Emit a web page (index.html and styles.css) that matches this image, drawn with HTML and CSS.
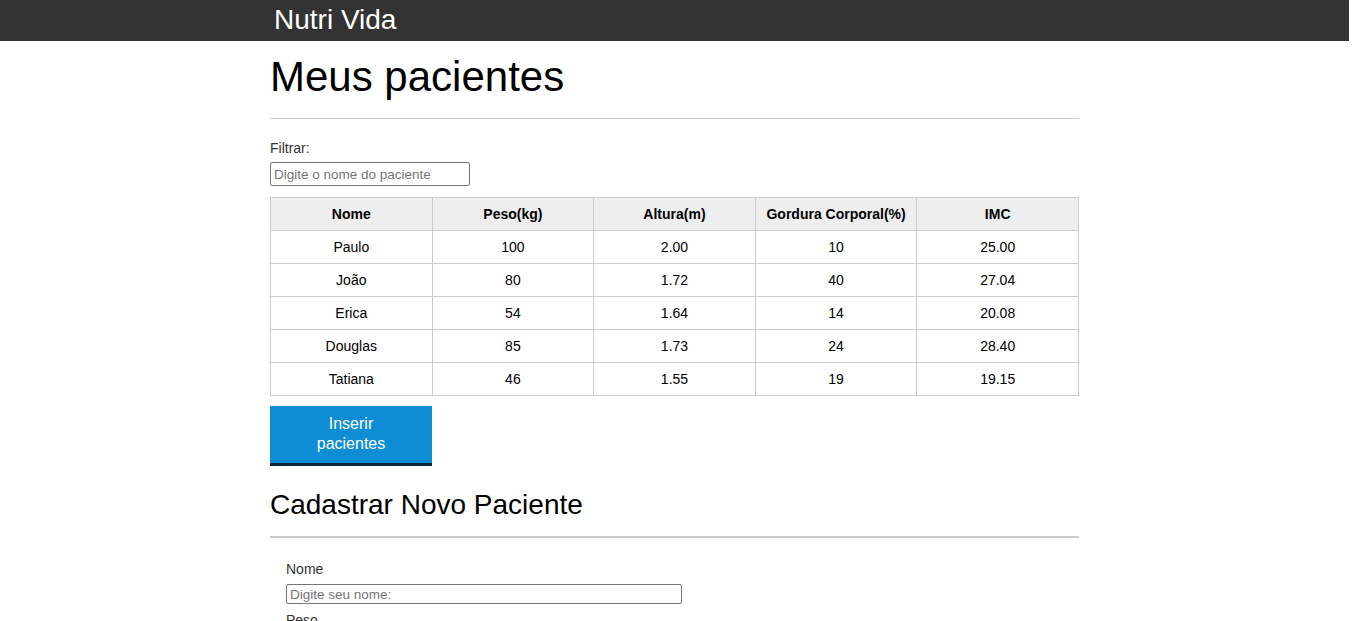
FILE: index.html
```html
<!DOCTYPE html>
<html lang="pt-br">
<head>
<meta charset="utf-8">
<title>Nutri Vida</title>
<link rel="stylesheet" href="styles.css">
</head>
<body>
<header class="topbar">
  <div class="container">
    <h1 class="brand">Nutri Vida</h1>
  </div>
</header>
<main class="container">
  <section>
    <h2 class="page-title">Meus pacientes</h2>
    <label class="filter-label" for="filtro">Filtrar:</label>
    <input class="filter-input" id="filtro" type="text" placeholder="Digite o nome do paciente">
    <table class="patients">
      <thead>
        <tr><th>Nome</th><th>Peso(kg)</th><th>Altura(m)</th><th>Gordura Corporal(%)</th><th>IMC</th></tr>
      </thead>
      <tbody>
        <tr><td>Paulo</td><td>100</td><td>2.00</td><td>10</td><td>25.00</td></tr>
        <tr><td>João</td><td>80</td><td>1.72</td><td>40</td><td>27.04</td></tr>
        <tr><td>Erica</td><td>54</td><td>1.64</td><td>14</td><td>20.08</td></tr>
        <tr><td>Douglas</td><td>85</td><td>1.73</td><td>24</td><td>28.40</td></tr>
        <tr><td>Tatiana</td><td>46</td><td>1.55</td><td>19</td><td>19.15</td></tr>
      </tbody>
    </table>
    <button class="btn" type="button">Inserir pacientes</button>
  </section>
  <section>
    <h2 class="section-title">Cadastrar Novo Paciente</h2>
    <form class="form">
      <div class="field">
        <label for="nome">Nome</label>
        <input id="nome" type="text" placeholder="Digite seu nome:">
      </div>
      <div class="field">
        <label for="peso">Peso</label>
        <input id="peso" type="text" placeholder="Digite seu peso:">
      </div>
    </form>
  </section>
</main>
</body>
</html>
```
FILE: styles.css
```css
html, body {
  margin: 0;
  padding: 0;
}
body {
  font-family: "Liberation Sans", Arial, sans-serif;
  color: #000;
  background: #fff;
  padding-right: 3px;
}
.container {
  width: 809px;
  margin: 0 auto;
}
.topbar {
  background: #333;
  height: 41px;
}
.brand {
  margin: 0;
  padding: 4px 0 0 4px;
  font-size: 28px;
  font-weight: normal;
  color: #fff;
  line-height: 32px;
}
.page-title {
  margin: 0;
  padding-top: 13px;
  font-size: 42px;
  font-weight: normal;
  line-height: 46px;
  padding-bottom: 18px;
  border-bottom: 1px solid #ccc;
}
.filter-label {
  display: block;
  margin-top: 21px;
  font-size: 14px;
  line-height: 16px;
  color: #333;
}
.filter-input {
  display: block;
  box-sizing: border-box;
  width: 200px;
  height: 24px;
  margin-top: 6px;
  padding: 0 3px;
  border: 1px solid #767676;
  border-radius: 2px;
  font-family: "Liberation Sans", Arial, sans-serif;
  font-size: 13.5px;
}
.filter-input::placeholder,
.field input::placeholder {
  color: #757575;
}
.patients {
  width: 100%;
  margin-top: 11px;
  border-collapse: collapse;
  table-layout: fixed;
  font-size: 14px;
}
.patients th,
.patients td {
  border: 1px solid #ccc;
  height: 32px;
  padding: 0;
  text-align: center;
  vertical-align: middle;
}
.patients th {
  background: #eee;
  font-weight: bold;
}
.btn {
  display: block;
  box-sizing: border-box;
  width: 162px;
  height: 60px;
  margin-top: 10px;
  padding: 0 30px 2px;
  border: none;
  border-bottom: 3px solid #0b2a3d;
  background: #0e8dd5;
  color: #fff;
  font-family: "Liberation Sans", Arial, sans-serif;
  font-size: 16px;
  line-height: 20px;
}
.section-title {
  margin: 0;
  margin-top: 23px;
  font-size: 28px;
  font-weight: normal;
  line-height: 32px;
  padding-bottom: 15px;
  border-bottom: 2px solid #ccc;
}
.form {
  padding: 23px 16px 0;
}
.field label {
  display: block;
  font-size: 14px;
  line-height: 16px;
  color: #333;
}
.field input {
  display: block;
  box-sizing: border-box;
  width: 396px;
  height: 20px;
  margin-top: 7px;
  margin-bottom: 8px;
  padding: 0 3px;
  border: 1px solid #767676;
  border-radius: 2px;
  font-family: "Liberation Sans", Arial, sans-serif;
  font-size: 13.5px;
}
```
